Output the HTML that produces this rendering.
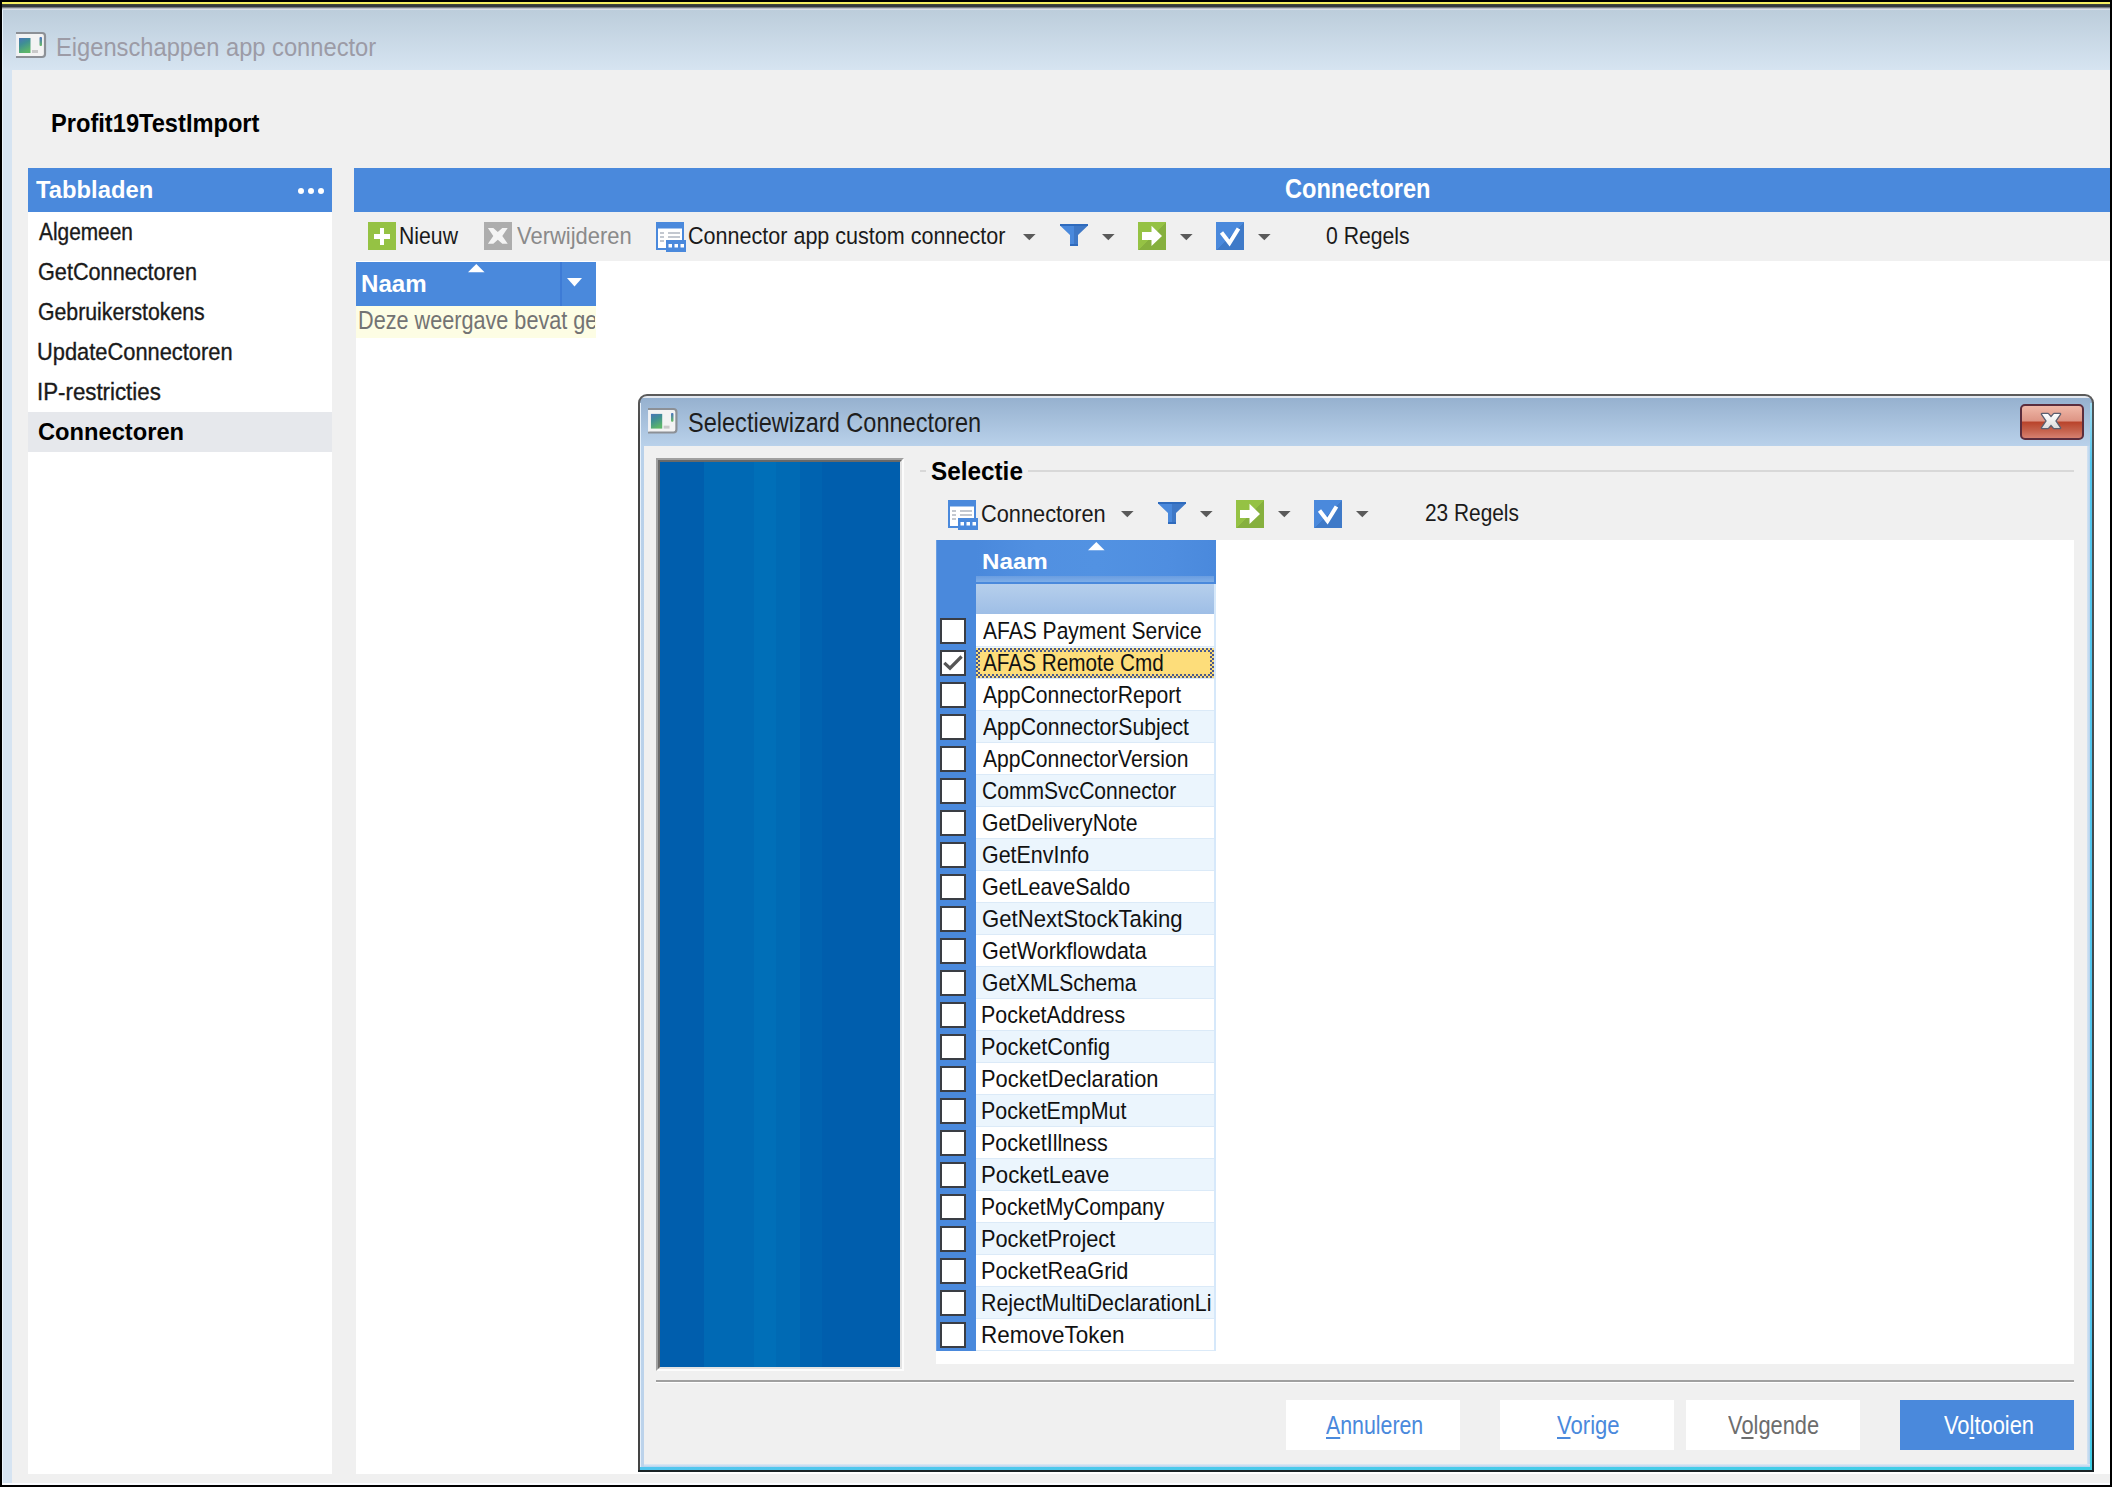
<!DOCTYPE html>
<html><head><meta charset="utf-8"><style>
html,body{margin:0;padding:0;}
body{width:2112px;height:1487px;position:relative;overflow:hidden;background:#000;font-family:"Liberation Sans",sans-serif;}
.b{position:absolute;box-sizing:border-box;}
svg.b{overflow:visible}
.tx{position:absolute;white-space:pre;transform-origin:0 0;}
.cb{width:25.5px;height:25.5px;border:2.4px solid #3a3d44;background:#fff;}
u{text-decoration-thickness:2px;text-underline-offset:3px}
</style></head><body>
<div class="b" style="left:2px;top:2px;width:2108px;height:2px;background:#f6ef62;"></div>
<div class="b" style="left:2px;top:4px;width:2108px;height:6px;background:linear-gradient(#4a4c3a 0px,#34383c 1px,#34383c 2.5px,#b8bcc4 4.5px,#d9dee9 5.2px,#d9dee9 6px);"></div>
<div class="b" style="left:2px;top:10px;width:2108px;height:60px;background:linear-gradient(#bccddb,#d6e4f1);"></div>
<div class="b" style="left:2px;top:70px;width:10px;height:1414px;background:#d6e4f2;"></div>
<div class="b" style="left:2px;top:10px;width:1px;height:1474px;background:#eaf5fd;"></div>
<div class="b" style="left:12px;top:70px;width:2098px;height:1414px;background:#f0f0f0;"></div>
<div class="b" style="left:2px;top:1483px;width:2108px;height:2px;background:#fafcff;"></div>
<div class="b" style="left:28px;top:168px;width:304px;height:44px;background:#4a89dc;"></div>
<div class="b" style="left:28px;top:212px;width:304px;height:1262px;background:#ffffff;"></div>
<div class="b" style="left:28px;top:412px;width:304px;height:39.69999999999999px;background:#e6e8ec;"></div>
<div class="b" style="left:354px;top:168px;width:1756px;height:44px;background:#4a89dc;"></div>
<div class="b" style="left:356px;top:261px;width:1754px;height:1213px;background:#ffffff;"></div>
<div class="b" style="left:356px;top:262px;width:240px;height:43.5px;background:#4a89dc;"></div>
<div class="b" style="left:560px;top:262px;width:2px;height:43.5px;background:#3d7bd6;"></div>
<div class="b" style="left:356px;top:305.5px;width:240px;height:32.0px;background:#fdfde4;"></div>
<div class="b" style="left:638px;top:394px;width:1456px;height:1078px;background:linear-gradient(#5c5c5c,#444 40px);border-radius:9px 9px 0 0"></div>
<div class="b" style="left:640px;top:396px;width:1452px;height:1074px;background:linear-gradient(#e4e9f0 0px,#e4e9f0 2px,#96b1cf 2px,#b9d1ea 50px,#bcd3eb 100%);border-radius:7px 7px 0 0"></div>
<div class="b" style="left:640px;top:403px;width:1px;height:1064px;background:#e6f0fa;"></div>
<div class="b" style="left:2086px;top:446px;width:4px;height:1021px;background:linear-gradient(90deg,#dfe9f3,#b4d2ee);"></div>
<div class="b" style="left:643.5px;top:1464px;width:1446.5px;height:3px;background:linear-gradient(#dfe9f3,#b4d2ee);"></div>
<div class="b" style="left:2090px;top:403px;width:2px;height:1066.5px;background:linear-gradient(#9fdcf2,#52c6ee 60px,#52c6ee 95%,#3ad0e4);"></div>
<div class="b" style="left:640px;top:1467px;width:1452px;height:2.5px;background:linear-gradient(90deg,#52c6ee,#3ecfe6);"></div>
<div class="b" style="left:638px;top:1469.5px;width:1456px;height:2.5px;background:#1a2326;"></div>
<div class="b" style="left:2092px;top:402px;width:2px;height:1070px;background:linear-gradient(#4f5558,#3a4246 85%,#1a2326);"></div>
<div class="b" style="left:643.5px;top:446px;width:1443.0px;height:1018px;background:#f0f0f0;"></div>
<div class="b" style="left:656px;top:458px;width:248px;height:913px;background:#a0a0a0;border:2px solid;border-color:#a0a0a0 #fcfcfc #fcfcfc #a0a0a0;"></div>
<div class="b" style="left:658px;top:460px;width:244px;height:909px;background:#696969;border:2px solid;border-color:#696969 #e3e3e3 #e3e3e3 #696969;"></div>
<div class="b" style="left:660px;top:462px;width:240px;height:905px;background:linear-gradient(90deg,#005ead 0px,#005ead 44px,#0069b4 44px,#0069b4 94px,#006fb8 94px,#006fb8 116px,#006ab4 116px,#006ab4 140px,#0063b0 140px,#0063b0 162px,#005ead 162px);"></div>
<div class="b" style="left:920px;top:470px;width:6px;height:2px;background:#d8d8d8;"></div>
<div class="b" style="left:1028px;top:470px;width:1046px;height:2px;background:#d8d8d8;"></div>
<div class="b" style="left:936px;top:540px;width:1138px;height:824px;background:#ffffff;"></div>
<div class="b" style="left:936px;top:540px;width:280px;height:44px;background:#4a89dc;"></div>
<div class="b" style="left:976px;top:540px;width:240px;height:36px;background:linear-gradient(90deg,#4a89dc 0%,#5190e1 25%,#5292e2 50%,#4f8ee0 80%,#4a89dc 100%);"></div>
<div class="b" style="left:976px;top:576px;width:238px;height:6px;background:linear-gradient(#6a9de0,#7eaee8);"></div>
<div class="b" style="left:976px;top:584px;width:238px;height:30px;background:linear-gradient(#b6cfec,#9ebee6);"></div>
<div class="b" style="left:1214px;top:584px;width:2px;height:767px;background:#d6e8fa;"></div>
<div class="b" style="left:936px;top:584px;width:40px;height:767px;background:#4a89dc;"></div>
<div class="b" style="left:936px;top:540px;width:1px;height:811px;background:#6a9ee2;"></div>
<div class="b" style="left:976px;top:615px;width:238px;height:32px;background:#ffffff;"></div>
<div class="b" style="left:976px;top:646px;width:238px;height:1px;background:#dbeaf8;"></div>
<div class="b" style="left:976px;top:647px;width:238px;height:32px;background:#ebf5fd;"></div>
<div class="b" style="left:976px;top:678px;width:238px;height:1px;background:#dbeaf8;"></div>
<div class="b" style="left:976px;top:679px;width:238px;height:32px;background:#ffffff;"></div>
<div class="b" style="left:976px;top:710px;width:238px;height:1px;background:#dbeaf8;"></div>
<div class="b" style="left:976px;top:711px;width:238px;height:32px;background:#ebf5fd;"></div>
<div class="b" style="left:976px;top:742px;width:238px;height:1px;background:#dbeaf8;"></div>
<div class="b" style="left:976px;top:743px;width:238px;height:32px;background:#ffffff;"></div>
<div class="b" style="left:976px;top:774px;width:238px;height:1px;background:#dbeaf8;"></div>
<div class="b" style="left:976px;top:775px;width:238px;height:32px;background:#ebf5fd;"></div>
<div class="b" style="left:976px;top:806px;width:238px;height:1px;background:#dbeaf8;"></div>
<div class="b" style="left:976px;top:807px;width:238px;height:32px;background:#ffffff;"></div>
<div class="b" style="left:976px;top:838px;width:238px;height:1px;background:#dbeaf8;"></div>
<div class="b" style="left:976px;top:839px;width:238px;height:32px;background:#ebf5fd;"></div>
<div class="b" style="left:976px;top:870px;width:238px;height:1px;background:#dbeaf8;"></div>
<div class="b" style="left:976px;top:871px;width:238px;height:32px;background:#ffffff;"></div>
<div class="b" style="left:976px;top:902px;width:238px;height:1px;background:#dbeaf8;"></div>
<div class="b" style="left:976px;top:903px;width:238px;height:32px;background:#ebf5fd;"></div>
<div class="b" style="left:976px;top:934px;width:238px;height:1px;background:#dbeaf8;"></div>
<div class="b" style="left:976px;top:935px;width:238px;height:32px;background:#ffffff;"></div>
<div class="b" style="left:976px;top:966px;width:238px;height:1px;background:#dbeaf8;"></div>
<div class="b" style="left:976px;top:967px;width:238px;height:32px;background:#ebf5fd;"></div>
<div class="b" style="left:976px;top:998px;width:238px;height:1px;background:#dbeaf8;"></div>
<div class="b" style="left:976px;top:999px;width:238px;height:32px;background:#ffffff;"></div>
<div class="b" style="left:976px;top:1030px;width:238px;height:1px;background:#dbeaf8;"></div>
<div class="b" style="left:976px;top:1031px;width:238px;height:32px;background:#ebf5fd;"></div>
<div class="b" style="left:976px;top:1062px;width:238px;height:1px;background:#dbeaf8;"></div>
<div class="b" style="left:976px;top:1063px;width:238px;height:32px;background:#ffffff;"></div>
<div class="b" style="left:976px;top:1094px;width:238px;height:1px;background:#dbeaf8;"></div>
<div class="b" style="left:976px;top:1095px;width:238px;height:32px;background:#ebf5fd;"></div>
<div class="b" style="left:976px;top:1126px;width:238px;height:1px;background:#dbeaf8;"></div>
<div class="b" style="left:976px;top:1127px;width:238px;height:32px;background:#ffffff;"></div>
<div class="b" style="left:976px;top:1158px;width:238px;height:1px;background:#dbeaf8;"></div>
<div class="b" style="left:976px;top:1159px;width:238px;height:32px;background:#ebf5fd;"></div>
<div class="b" style="left:976px;top:1190px;width:238px;height:1px;background:#dbeaf8;"></div>
<div class="b" style="left:976px;top:1191px;width:238px;height:32px;background:#ffffff;"></div>
<div class="b" style="left:976px;top:1222px;width:238px;height:1px;background:#dbeaf8;"></div>
<div class="b" style="left:976px;top:1223px;width:238px;height:32px;background:#ebf5fd;"></div>
<div class="b" style="left:976px;top:1254px;width:238px;height:1px;background:#dbeaf8;"></div>
<div class="b" style="left:976px;top:1255px;width:238px;height:32px;background:#ffffff;"></div>
<div class="b" style="left:976px;top:1286px;width:238px;height:1px;background:#dbeaf8;"></div>
<div class="b" style="left:976px;top:1287px;width:238px;height:32px;background:#ebf5fd;"></div>
<div class="b" style="left:976px;top:1318px;width:238px;height:1px;background:#dbeaf8;"></div>
<div class="b" style="left:976px;top:1319px;width:238px;height:32px;background:#ffffff;"></div>
<div class="b" style="left:976px;top:1350px;width:238px;height:1px;background:#dbeaf8;"></div>
<div class="b" style="left:976px;top:647.5px;width:238px;height:30.5px;background:repeating-conic-gradient(#4b5b8e 0 25%,#fddd7a 0 50%) 0 0/4px 4px;"></div>
<div class="b" style="left:980px;top:651.5px;width:230px;height:22.5px;background:#fddd7a;"></div>
<div class="b cb" style="left:940px;top:618px"></div>
<div class="b cb" style="left:940px;top:650px"></div>
<div class="b cb" style="left:940px;top:682px"></div>
<div class="b cb" style="left:940px;top:714px"></div>
<div class="b cb" style="left:940px;top:746px"></div>
<div class="b cb" style="left:940px;top:778px"></div>
<div class="b cb" style="left:940px;top:810px"></div>
<div class="b cb" style="left:940px;top:842px"></div>
<div class="b cb" style="left:940px;top:874px"></div>
<div class="b cb" style="left:940px;top:906px"></div>
<div class="b cb" style="left:940px;top:938px"></div>
<div class="b cb" style="left:940px;top:970px"></div>
<div class="b cb" style="left:940px;top:1002px"></div>
<div class="b cb" style="left:940px;top:1034px"></div>
<div class="b cb" style="left:940px;top:1066px"></div>
<div class="b cb" style="left:940px;top:1098px"></div>
<div class="b cb" style="left:940px;top:1130px"></div>
<div class="b cb" style="left:940px;top:1162px"></div>
<div class="b cb" style="left:940px;top:1194px"></div>
<div class="b cb" style="left:940px;top:1226px"></div>
<div class="b cb" style="left:940px;top:1258px"></div>
<div class="b cb" style="left:940px;top:1290px"></div>
<div class="b cb" style="left:940px;top:1322px"></div>
<svg class="b" style="left:940px;top:650px" width="26" height="26"><path d="M4.3 12.8 L10 18.2 L21.6 6.5" stroke="#555" stroke-width="3.2" fill="none"/></svg>
<div class="b" style="left:656px;top:1380px;width:1418px;height:2px;background:#a0a0a0;"></div>
<div class="b" style="left:656px;top:1382px;width:1418px;height:1px;background:#ffffff;"></div>
<div class="b" style="left:1286px;top:1400px;width:174px;height:50px;background:#ffffff;"></div>
<div class="b" style="left:1500px;top:1400px;width:174px;height:50px;background:#ffffff;"></div>
<div class="b" style="left:1686px;top:1400px;width:174px;height:50px;background:#ffffff;"></div>
<div class="b" style="left:1900px;top:1400px;width:174px;height:50px;background:#4a89dc;"></div>
<svg class="b" style="left:16px;top:32px" width="30" height="26" viewBox="0 0 30 26">
<defs><linearGradient id="wg16" x1="0" y1="0" x2="0.4" y2="1"><stop offset="0" stop-color="#4a74b8"/><stop offset="0.45" stop-color="#3f8f94"/><stop offset="1" stop-color="#5cb56a"/></linearGradient>
<linearGradient id="wb16" x1="0" y1="0" x2="0" y2="1"><stop offset="0" stop-color="#4a72c0"/><stop offset="1" stop-color="#66bb66"/></linearGradient></defs>
<path d="M0 1 H26 Q29 1 29 4 V22 Q29 25 26 25 H0" fill="#f3f3f3" stroke="#8c9096" stroke-width="2.2"/>
<rect x="0" y="2.2" width="1.5" height="21.6" fill="#eef0f3"/>
<rect x="3" y="6" width="11.5" height="15" fill="url(#wg16)"/>
<rect x="23.5" y="5" width="2.5" height="9" rx="1" fill="url(#wb16)"/>
<rect x="16" y="18" width="6" height="3" fill="#c9c9c9"/>
</svg>
<svg class="b" style="left:648px;top:408px" width="29.4" height="25.5" viewBox="0 0 30 26">
<defs><linearGradient id="wg648" x1="0" y1="0" x2="0.4" y2="1"><stop offset="0" stop-color="#4a74b8"/><stop offset="0.45" stop-color="#3f8f94"/><stop offset="1" stop-color="#5cb56a"/></linearGradient>
<linearGradient id="wb648" x1="0" y1="0" x2="0" y2="1"><stop offset="0" stop-color="#4a72c0"/><stop offset="1" stop-color="#66bb66"/></linearGradient></defs>
<path d="M0 1 H26 Q29 1 29 4 V22 Q29 25 26 25 H0" fill="#f3f3f3" stroke="#8c9096" stroke-width="2.2"/>
<rect x="0" y="2.2" width="1.5" height="21.6" fill="#eef0f3"/>
<rect x="3" y="6" width="11.5" height="15" fill="url(#wg648)"/>
<rect x="23.5" y="5" width="2.5" height="9" rx="1" fill="url(#wb648)"/>
<rect x="16" y="18" width="6" height="3" fill="#c9c9c9"/>
</svg>
<div class="b" style="left:297.8px;top:187.8px;width:6.4px;height:6.4px;border-radius:50%;background:#fff"></div>
<div class="b" style="left:307.8px;top:187.8px;width:6.4px;height:6.4px;border-radius:50%;background:#fff"></div>
<div class="b" style="left:317.8px;top:187.8px;width:6.4px;height:6.4px;border-radius:50%;background:#fff"></div>
<div class="b" style="left:368px;top:222px;width:28px;height:28px;background:#95c244;"></div>
<div class="b" style="left:374px;top:234px;width:16px;height:4.5px;background:#ffffff;"></div>
<div class="b" style="left:379.7px;top:227.5px;width:4.600000000000023px;height:17.0px;background:#ffffff;"></div>
<div class="b" style="left:484px;top:222px;width:28px;height:28px;background:#adadad;"></div>
<svg class="b" style="left:484px;top:222px" width="28" height="28"><path d="M3.9 6 H9.3 L13.8 10.1 L18.3 6 H23.7 L18.3 13.9 L23.7 21.8 H18.3 L13.8 17.7 L9.3 21.8 H3.9 L9.3 13.9 Z" fill="#f4f4f4"/></svg>
<svg class="b" style="left:656px;top:222px" width="32" height="32" viewBox="0 0 32 32">
<rect x="1" y="1" width="26" height="26" fill="#fff" stroke="#4a89dc" stroke-width="2"/>
<rect x="0" y="0" width="28" height="6.5" fill="#4a89dc"/>
<rect x="4" y="10" width="4" height="2" fill="#c3c8d0"/><rect x="4" y="14" width="4" height="2" fill="#c3c8d0"/><rect x="4" y="18" width="4" height="2" fill="#c3c8d0"/>
<rect x="12" y="10" width="12" height="2" fill="#c3c8d0"/><rect x="12" y="14" width="12" height="2" fill="#c3c8d0"/>
<rect x="10" y="18" width="20" height="12" fill="#4a89dc"/>
<rect x="12.5" y="22" width="3.5" height="3.5" fill="#fff"/><rect x="18.5" y="22" width="3.5" height="3.5" fill="#fff"/><rect x="24.5" y="22" width="3.5" height="3.5" fill="#fff"/>
</svg>
<svg class="b" style="left:948px;top:500px" width="32" height="32" viewBox="0 0 32 32">
<rect x="1" y="1" width="26" height="26" fill="#fff" stroke="#4a89dc" stroke-width="2"/>
<rect x="0" y="0" width="28" height="6.5" fill="#4a89dc"/>
<rect x="4" y="10" width="4" height="2" fill="#c3c8d0"/><rect x="4" y="14" width="4" height="2" fill="#c3c8d0"/><rect x="4" y="18" width="4" height="2" fill="#c3c8d0"/>
<rect x="12" y="10" width="12" height="2" fill="#c3c8d0"/><rect x="12" y="14" width="12" height="2" fill="#c3c8d0"/>
<rect x="10" y="18" width="20" height="12" fill="#4a89dc"/>
<rect x="12.5" y="22" width="3.5" height="3.5" fill="#fff"/><rect x="18.5" y="22" width="3.5" height="3.5" fill="#fff"/><rect x="24.5" y="22" width="3.5" height="3.5" fill="#fff"/>
</svg>
<svg class="b" style="left:1060px;top:224px" width="28" height="23" viewBox="0 0 28 23">
<defs><linearGradient id="fg1060" x1="0" x2="1"><stop offset="0" stop-color="#4a89dc"/><stop offset="0.5" stop-color="#4a89dc"/><stop offset="0.5" stop-color="#3f78c6"/><stop offset="1" stop-color="#3f78c6"/></linearGradient></defs>
<path d="M0 0 H28 V1.5 L18 11 V22 H10 V11 L0 1.5 Z" fill="url(#fg1060)"/>
<rect x="0" y="0" width="28" height="2" fill="#2f6bbd"/><rect x="10" y="20" width="8" height="2" fill="#2f6bbd"/>
</svg>
<svg class="b" style="left:1158px;top:502px" width="28" height="23" viewBox="0 0 28 23">
<defs><linearGradient id="fg1158" x1="0" x2="1"><stop offset="0" stop-color="#4a89dc"/><stop offset="0.5" stop-color="#4a89dc"/><stop offset="0.5" stop-color="#3f78c6"/><stop offset="1" stop-color="#3f78c6"/></linearGradient></defs>
<path d="M0 0 H28 V1.5 L18 11 V22 H10 V11 L0 1.5 Z" fill="url(#fg1158)"/>
<rect x="0" y="0" width="28" height="2" fill="#2f6bbd"/><rect x="10" y="20" width="8" height="2" fill="#2f6bbd"/>
</svg>
<svg class="b" style="left:1138px;top:222px" width="28" height="28" viewBox="0 0 28 28">
<defs><linearGradient id="ag1138" x1="0" y1="0" x2="1" y2="1"><stop offset="0" stop-color="#95c244"/><stop offset="0.5" stop-color="#95c244"/><stop offset="0.5" stop-color="#86b03e"/><stop offset="1" stop-color="#86b03e"/></linearGradient></defs>
<rect width="28" height="28" fill="url(#ag1138)"/>
<path d="M4 10 H13.5 V3.7 L24 14 L13.5 24 V18 H4 Z" fill="#fff"/>
</svg>
<svg class="b" style="left:1236px;top:500px" width="28" height="28" viewBox="0 0 28 28">
<defs><linearGradient id="ag1236" x1="0" y1="0" x2="1" y2="1"><stop offset="0" stop-color="#95c244"/><stop offset="0.5" stop-color="#95c244"/><stop offset="0.5" stop-color="#86b03e"/><stop offset="1" stop-color="#86b03e"/></linearGradient></defs>
<rect width="28" height="28" fill="url(#ag1236)"/>
<path d="M4 10 H13.5 V3.7 L24 14 L13.5 24 V18 H4 Z" fill="#fff"/>
</svg>
<svg class="b" style="left:1216px;top:222px" width="28" height="28" viewBox="0 0 28 28">
<defs><linearGradient id="cg1216" x1="0" y1="0" x2="1" y2="1"><stop offset="0" stop-color="#4a89dc"/><stop offset="0.5" stop-color="#4a89dc"/><stop offset="0.5" stop-color="#3f7ac8"/><stop offset="1" stop-color="#3f7ac8"/></linearGradient></defs>
<rect width="28" height="28" fill="url(#cg1216)"/>
<path d="M5.5 10.5 L13.5 21 L22.5 6.5" stroke="#fff" stroke-width="4" fill="none" stroke-linejoin="miter"/>
</svg>
<svg class="b" style="left:1314px;top:500px" width="28" height="28" viewBox="0 0 28 28">
<defs><linearGradient id="cg1314" x1="0" y1="0" x2="1" y2="1"><stop offset="0" stop-color="#4a89dc"/><stop offset="0.5" stop-color="#4a89dc"/><stop offset="0.5" stop-color="#3f7ac8"/><stop offset="1" stop-color="#3f7ac8"/></linearGradient></defs>
<rect width="28" height="28" fill="url(#cg1314)"/>
<path d="M5.5 10.5 L13.5 21 L22.5 6.5" stroke="#fff" stroke-width="4" fill="none" stroke-linejoin="miter"/>
</svg>
<svg class="b" style="left:1023px;top:233.65px" width="12.6" height="6.3"><path d="M0 0 H12.6 L6.3 6.3 Z" fill="#5a5a5a"/></svg>
<svg class="b" style="left:1101.8px;top:233.65px" width="12.6" height="6.3"><path d="M0 0 H12.6 L6.3 6.3 Z" fill="#5a5a5a"/></svg>
<svg class="b" style="left:1179.6px;top:233.65px" width="12.6" height="6.3"><path d="M0 0 H12.6 L6.3 6.3 Z" fill="#5a5a5a"/></svg>
<svg class="b" style="left:1257.8px;top:233.65px" width="12.6" height="6.3"><path d="M0 0 H12.6 L6.3 6.3 Z" fill="#5a5a5a"/></svg>
<svg class="b" style="left:1121px;top:510.85px" width="12.6" height="6.3"><path d="M0 0 H12.6 L6.3 6.3 Z" fill="#5a5a5a"/></svg>
<svg class="b" style="left:1199.7px;top:510.85px" width="12.6" height="6.3"><path d="M0 0 H12.6 L6.3 6.3 Z" fill="#5a5a5a"/></svg>
<svg class="b" style="left:1277.7px;top:510.85px" width="12.6" height="6.3"><path d="M0 0 H12.6 L6.3 6.3 Z" fill="#5a5a5a"/></svg>
<svg class="b" style="left:1355.7px;top:510.85px" width="12.6" height="6.3"><path d="M0 0 H12.6 L6.3 6.3 Z" fill="#5a5a5a"/></svg>
<svg class="b" style="left:567.3px;top:277.8px" width="15" height="8.6"><path d="M0 0 H15 L7.5 8.6 Z" fill="#fff"/></svg>
<svg class="b" style="left:467.6px;top:263.9px" width="16.6" height="8.3"><path d="M0 8.3 H16.6 L8.3 0 Z" fill="#fff"/></svg>
<svg class="b" style="left:1087.5px;top:542px" width="16.6" height="8.3"><path d="M0 8.3 H16.6 L8.3 0 Z" fill="#fff"/></svg>
<div class="b" style="left:2020px;top:404px;width:64px;height:36px;border:2px solid #5b2d3d;border-radius:5px;background:linear-gradient(#f0b8a8 0%,#dd9484 47%,#b9432b 50%,#c4604a 75%,#d68070 100%)"></div>
<svg class="b" style="left:2034px;top:406px" width="34" height="30" viewBox="0 0 34 30"><defs><linearGradient id="xg" x1="0" y1="0" x2="0" y2="1"><stop offset="0" stop-color="#ffffff"/><stop offset="1" stop-color="#dcdcdc"/></linearGradient></defs><path d="M8 8 H14 L17 11.5 L20 8 H26 L21.2 15 L26 22 H20 L17 18.5 L14 22 H8 L12.8 15 Z" fill="url(#xg)" stroke="#5b5f70" stroke-width="2.6" stroke-linejoin="round" paint-order="stroke"/></svg>
<div class="tx" style="left:56.19px;top:33.86px;font-size:26.16px;line-height:26.16px;color:#9c9ba6;transform:scaleX(0.9060);">Eigenschappen app connector</div>
<div class="tx" style="left:51.19px;top:110.46px;font-size:26.16px;line-height:26.16px;color:#000;transform:scaleX(0.9039);font-weight:bold;">Profit19TestImport</div>
<div class="tx" style="left:35.80px;top:177.93px;font-size:24.42px;line-height:24.42px;color:#fff;transform:scaleX(0.9748);font-weight:bold;">Tabbladen</div>
<div class="tx" style="left:1284.72px;top:176.36px;font-size:26.74px;line-height:26.74px;color:#fff;transform:scaleX(0.8827);font-weight:bold;">Connectoren</div>
<div class="tx" style="left:38.60px;top:221.06px;font-size:23.55px;line-height:23.55px;color:#1a1a1a;transform:scaleX(0.8857);-webkit-text-stroke:0.35px #1a1a1a;">Algemeen</div>
<div class="tx" style="left:37.68px;top:261.06px;font-size:23.55px;line-height:23.55px;color:#1a1a1a;transform:scaleX(0.9199);-webkit-text-stroke:0.35px #1a1a1a;">GetConnectoren</div>
<div class="tx" style="left:37.70px;top:301.06px;font-size:23.55px;line-height:23.55px;color:#1a1a1a;transform:scaleX(0.9033);-webkit-text-stroke:0.35px #1a1a1a;">Gebruikerstokens</div>
<div class="tx" style="left:36.74px;top:341.06px;font-size:23.55px;line-height:23.55px;color:#1a1a1a;transform:scaleX(0.9279);-webkit-text-stroke:0.35px #1a1a1a;">UpdateConnectoren</div>
<div class="tx" style="left:36.71px;top:381.06px;font-size:23.55px;line-height:23.55px;color:#1a1a1a;transform:scaleX(0.9461);-webkit-text-stroke:0.35px #1a1a1a;">IP-restricties</div>
<div class="tx" style="left:38.49px;top:421.06px;font-size:23.55px;line-height:23.55px;color:#000;transform:scaleX(1.0056);font-weight:bold;">Connectoren</div>
<div class="tx" style="left:398.97px;top:224.71px;font-size:23.26px;line-height:23.26px;color:#1a1a1a;transform:scaleX(0.9127);">Nieuw</div>
<div class="tx" style="left:516.70px;top:224.71px;font-size:23.26px;line-height:23.26px;color:#8a8a8a;transform:scaleX(0.9442);">Verwijderen</div>
<div class="tx" style="left:688.37px;top:224.71px;font-size:23.26px;line-height:23.26px;color:#1a1a1a;transform:scaleX(0.9267);">Connector app custom connector</div>
<div class="tx" style="left:1326.09px;top:224.71px;font-size:23.26px;line-height:23.26px;color:#1a1a1a;transform:scaleX(0.9111);">0 Regels</div>
<div class="tx" style="left:361.28px;top:272.86px;font-size:23.55px;line-height:23.55px;color:#fff;transform:scaleX(1.0226);font-weight:bold;">Naam</div>
<div style="position:absolute;left:0;top:0;width:594.5px;height:1487px;overflow:hidden"><div class="tx" style="left:358.13px;top:308.10px;font-size:25.87px;line-height:25.87px;color:#737373;transform:scaleX(0.8367);">Deze weergave bevat geen gegevens</div></div>
<div class="tx" style="left:687.53px;top:409.72px;font-size:27.03px;line-height:27.03px;color:#1e1e1e;transform:scaleX(0.8713);">Selectiewizard Connectoren</div>
<div class="tx" style="left:930.79px;top:457.58px;font-size:26.6px;line-height:26.6px;color:#000;transform:scaleX(0.9141);font-weight:bold;">Selectie</div>
<div class="tx" style="left:980.68px;top:503.06px;font-size:23.55px;line-height:23.55px;color:#1a1a1a;transform:scaleX(0.9248);">Connectoren</div>
<div class="tx" style="left:1425.10px;top:502.11px;font-size:23.26px;line-height:23.26px;color:#1a1a1a;transform:scaleX(0.8971);">23 Regels</div>
<div class="tx" style="left:981.83px;top:550.41px;font-size:22.67px;line-height:22.67px;color:#fff;transform:scaleX(1.0661);font-weight:bold;">Naam</div>
<div class="tx" style="left:982.60px;top:620.01px;font-size:23.26px;line-height:23.26px;color:#111;transform:scaleX(0.9046);">AFAS Payment Service</div>
<div class="tx" style="left:982.60px;top:652.01px;font-size:23.26px;line-height:23.26px;color:#111;transform:scaleX(0.8911);">AFAS Remote Cmd</div>
<div class="tx" style="left:982.60px;top:684.01px;font-size:23.26px;line-height:23.26px;color:#111;transform:scaleX(0.9069);">AppConnectorReport</div>
<div class="tx" style="left:982.60px;top:716.01px;font-size:23.26px;line-height:23.26px;color:#111;transform:scaleX(0.9106);">AppConnectorSubject</div>
<div class="tx" style="left:982.60px;top:748.01px;font-size:23.26px;line-height:23.26px;color:#111;transform:scaleX(0.9084);">AppConnectorVersion</div>
<div class="tx" style="left:982.39px;top:780.01px;font-size:23.26px;line-height:23.26px;color:#111;transform:scaleX(0.9061);">CommSvcConnector</div>
<div class="tx" style="left:982.39px;top:812.01px;font-size:23.26px;line-height:23.26px;color:#111;transform:scaleX(0.9112);">GetDeliveryNote</div>
<div class="tx" style="left:982.38px;top:844.01px;font-size:23.26px;line-height:23.26px;color:#111;transform:scaleX(0.9217);">GetEnvInfo</div>
<div class="tx" style="left:982.38px;top:876.01px;font-size:23.26px;line-height:23.26px;color:#111;transform:scaleX(0.9241);">GetLeaveSaldo</div>
<div class="tx" style="left:982.35px;top:908.01px;font-size:23.26px;line-height:23.26px;color:#111;transform:scaleX(0.9519);">GetNextStockTaking</div>
<div class="tx" style="left:982.37px;top:940.01px;font-size:23.26px;line-height:23.26px;color:#111;transform:scaleX(0.9266);">GetWorkflowdata</div>
<div class="tx" style="left:982.39px;top:972.01px;font-size:23.26px;line-height:23.26px;color:#111;transform:scaleX(0.9059);">GetXMLSchema</div>
<div class="tx" style="left:981.46px;top:1004.01px;font-size:23.26px;line-height:23.26px;color:#111;transform:scaleX(0.9221);">PocketAddress</div>
<div class="tx" style="left:981.43px;top:1036.01px;font-size:23.26px;line-height:23.26px;color:#111;transform:scaleX(0.9333);">PocketConfig</div>
<div class="tx" style="left:981.42px;top:1068.01px;font-size:23.26px;line-height:23.26px;color:#111;transform:scaleX(0.9405);">PocketDeclaration</div>
<div class="tx" style="left:981.45px;top:1100.01px;font-size:23.26px;line-height:23.26px;color:#111;transform:scaleX(0.9231);">PocketEmpMut</div>
<div class="tx" style="left:981.45px;top:1132.01px;font-size:23.26px;line-height:23.26px;color:#111;transform:scaleX(0.9254);">PocketIllness</div>
<div class="tx" style="left:981.39px;top:1164.01px;font-size:23.26px;line-height:23.26px;color:#111;transform:scaleX(0.9545);">PocketLeave</div>
<div class="tx" style="left:981.48px;top:1196.01px;font-size:23.26px;line-height:23.26px;color:#111;transform:scaleX(0.9100);">PocketMyCompany</div>
<div class="tx" style="left:981.43px;top:1228.01px;font-size:23.26px;line-height:23.26px;color:#111;transform:scaleX(0.9362);">PocketProject</div>
<div class="tx" style="left:981.43px;top:1260.01px;font-size:23.26px;line-height:23.26px;color:#111;transform:scaleX(0.9351);">PocketReaGrid</div>
<div style="position:absolute;left:0;top:0;width:1210.5px;height:1487px;overflow:hidden"><div class="tx" style="left:981.46px;top:1292.01px;font-size:23.26px;line-height:23.26px;color:#111;transform:scaleX(0.9190);">RejectMultiDeclarationList</div></div>
<div class="tx" style="left:981.37px;top:1324.01px;font-size:23.26px;line-height:23.26px;color:#111;transform:scaleX(0.9655);">RemoveToken</div>
<div class="tx" style="left:1326.30px;top:1412.16px;font-size:26.16px;line-height:26.16px;color:#4a89dc;transform:scaleX(0.8153);"><u>A</u>nnuleren</div>
<div class="tx" style="left:1557.40px;top:1412.16px;font-size:26.16px;line-height:26.16px;color:#4a89dc;transform:scaleX(0.8438);"><u>V</u>orige</div>
<div class="tx" style="left:1727.80px;top:1412.16px;font-size:26.16px;line-height:26.16px;color:#6d6d6d;transform:scaleX(0.8352);">V<u>o</u>lgende</div>
<div class="tx" style="left:1944.00px;top:1412.16px;font-size:26.16px;line-height:26.16px;color:#fff;transform:scaleX(0.8358);">Vo<u>l</u>tooien</div>
</body></html>
